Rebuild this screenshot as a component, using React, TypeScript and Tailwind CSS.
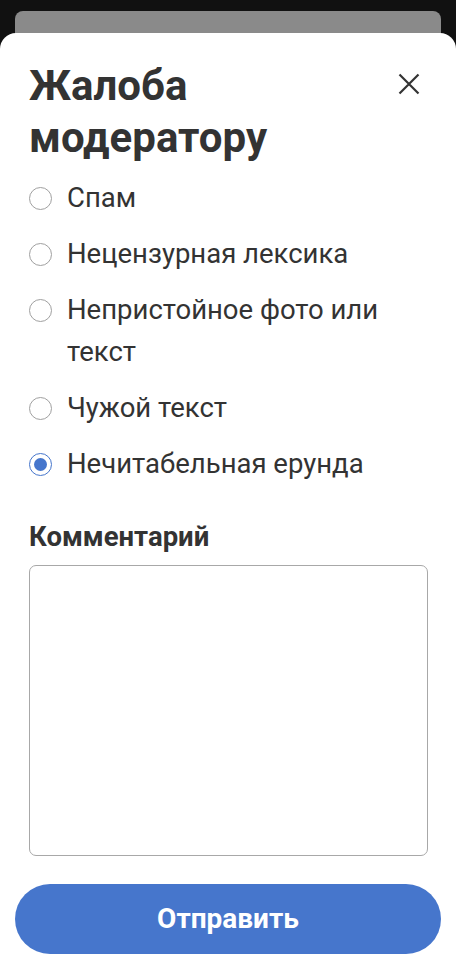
import { useState } from "react";

const options = [
  "Спам",
  "Нецензурная лексика",
  "Непристойное фото или текст",
  "Чужой текст",
  "Нечитабельная ерунда",
];

export default function App() {
  const [selected, setSelected] = useState(4);

  return (
    <div className="w-[456px] h-[960px] bg-[#111111] overflow-hidden font-['Roboto',sans-serif]">
      <div className="pt-[11px] px-[15px]">
        <div className="h-[30px] bg-[#8a8a8a] rounded-t-[8px]" />
      </div>
      <div className="-mt-[8px] bg-white rounded-t-[16px] h-[935px] flex flex-col">
        <div className="flex justify-between pl-[29px] pr-[36px] pt-[27px]">
          <h1 className="text-[42px] leading-[52px] font-bold text-[#333333] w-[300px]">
            Жалоба модератору
          </h1>
          <button className="mt-[13px] w-[22px] h-[22px] flex items-center justify-center">
            <svg width="22" height="22" viewBox="0 0 22 22" fill="none" stroke="#333333" strokeWidth="2.2">
              <path d="M1.5 1.5L20.5 20.5M20.5 1.5L1.5 20.5" />
            </svg>
          </button>
        </div>

        <div className="flex flex-col gap-[14px] pl-[29px] pr-[30px] mt-[13px]">
          {options.map((o, i) => (
            <label key={o} className="flex items-start cursor-pointer" onClick={() => setSelected(i)}>
              <span
                className={
                  selected === i
                    ? "mt-[10px] w-[23px] h-[23px] shrink-0 rounded-full border-[1.5px] border-[#4676cc] flex items-center justify-center"
                    : "mt-[10px] w-[23px] h-[23px] shrink-0 rounded-full border-[1.5px] border-[#a0a0a0] flex items-center justify-center"
                }
              >
                {selected === i && <span className="w-[13px] h-[13px] rounded-full bg-[#4676cc]" />}
              </span>
              <span className="ml-[15px] text-[27.5px] leading-[42px] text-[#333333] w-[330px]">{o}</span>
            </label>
          ))}
        </div>

        <div className="pl-[29px] pr-[29px] mt-[36px]">
          <div className="text-[27.5px] leading-[32px] font-bold text-[#333333]">Комментарий</div>
          <textarea className="mt-[12px] block w-[399px] h-[291px] border border-[#a8a8a8] rounded-[7px] resize-none outline-none" />
        </div>

        <div className="px-[15px] mt-[28px]">
          <button className="w-full h-[70px] rounded-full bg-[#4676cc] text-white text-[28px] font-bold">
            Отправить
          </button>
        </div>
      </div>
    </div>
  );
}
